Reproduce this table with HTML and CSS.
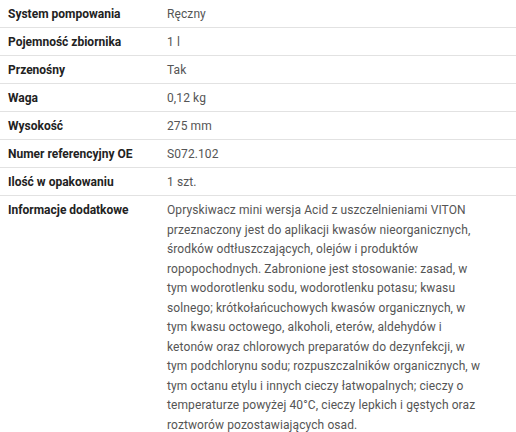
FILE: index.html
```html
<!DOCTYPE html>
<html lang="pl">
<head>
<meta charset="utf-8">
<link rel="stylesheet" href="styles.css">
</head>
<body>
<div class="specs">
  <div class="row"><div class="label">System pompowania</div><div class="value">Ręczny</div></div>
  <div class="row"><div class="label">Pojemność zbiornika</div><div class="value">1 l</div></div>
  <div class="row"><div class="label">Przenośny</div><div class="value">Tak</div></div>
  <div class="row"><div class="label">Waga</div><div class="value">0,12 kg</div></div>
  <div class="row"><div class="label">Wysokość</div><div class="value">275 mm</div></div>
  <div class="row"><div class="label">Numer referencyjny OE</div><div class="value">S072.102</div></div>
  <div class="row"><div class="label">Ilość w opakowaniu</div><div class="value">1 szt.</div></div>
  <div class="row"><div class="label">Informacje dodatkowe</div><div class="value desc">Opryskiwacz mini wersja Acid z uszczelnieniami VITON przeznaczony jest do aplikacji kwasów nieorganicznych, środków odtłuszczających, olejów i produktów ropopochodnych. Zabronione jest stosowanie: zasad, w tym wodorotlenku sodu, wodorotlenku potasu; kwasu solnego; krótkołańcuchowych kwasów organicznych, w tym kwasu octowego, alkoholi, eterów, aldehydów i ketonów oraz chlorowych preparatów do dezynfekcji, w tym podchlorynu sodu; rozpuszczalników organicznych, w tym octanu etylu i innych cieczy łatwopalnych; cieczy o temperaturze powyżej 40°C, cieczy lepkich i gęstych oraz roztworów pozostawiających osad.</div></div>
</div>
</body>
</html>
```
FILE: styles.css
```css
html, body {
  margin: 0;
  padding: 0;
  background: #ffffff;
}
body {
  font-family: Roboto, "Liberation Sans", sans-serif;
  font-size: 12px;
}
.specs {
  display: flex;
  flex-direction: column;
}
.row {
  display: grid;
  grid-template-columns: 159px 1fr;
  border-bottom: 1px solid #e2e2e2;
}
.label, .value {
  padding: 5px 8px 2.5px;
  line-height: 19.5px;
}
.label {
  font-weight: 700;
  color: #222222;
}
.value {
  color: #555555;
  letter-spacing: 0.1px;
}
.desc {
  padding-right: 28px;
}
```
